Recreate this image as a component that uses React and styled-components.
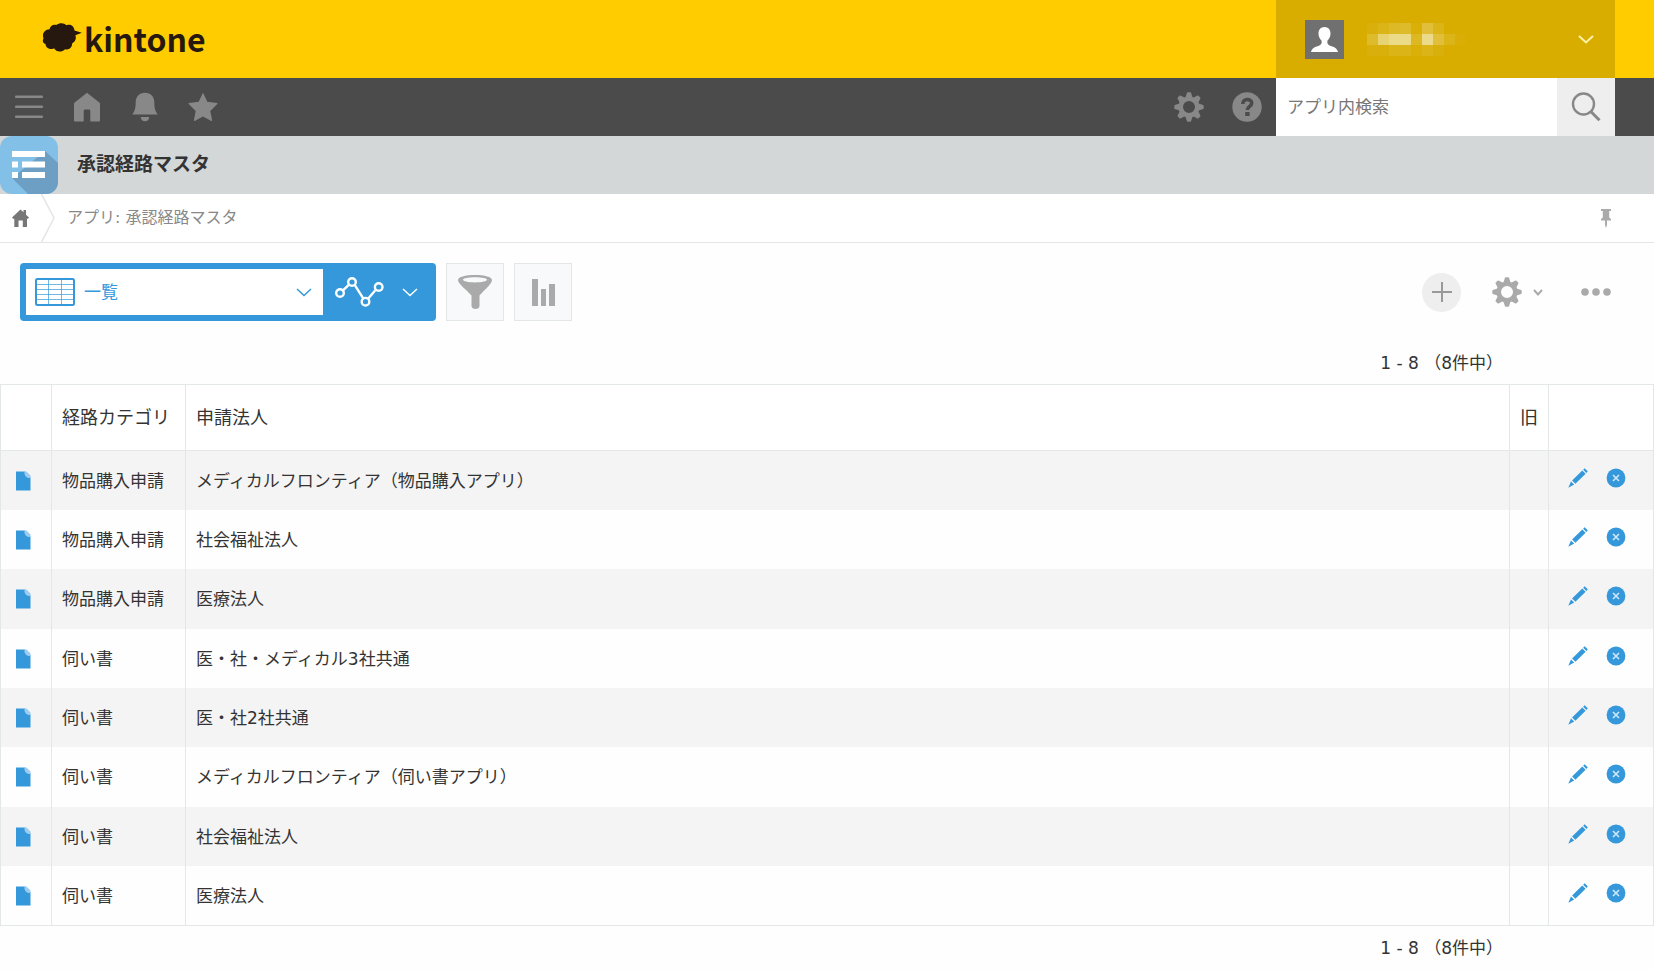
import React, { useState } from 'react';
import styled, { createGlobalStyle } from 'styled-components';

const GlobalStyle = createGlobalStyle`
  *, *::before, *::after {
    box-sizing: border-box;
  }
  body {
    margin: 0;
    background: #fefefe;
    color: #333;
    font-family: 'DejaVu Sans', 'Noto Sans CJK JP', sans-serif;
    font-size: 17px;
    line-height: 24px;
  }
  button, input, select {
    margin: 0;
    padding: 0;
    border: 0;
    border-radius: 0;
    background: none;
    color: inherit;
    font: inherit;
  }
  button {
    cursor: pointer;
  }
  a {
    color: inherit;
    text-decoration: none;
  }
  svg {
    display: block;
    flex: none;
  }
`;

const Header = styled.header`
  display: flex;
  justify-content: space-between;
  height: 78px;
  padding-right: 39px;
  background: #fc0;
`;

const Logo = styled.a`
  display: flex;
  align-items: center;
  gap: 2px;
  padding: 0 0 2px 42px;
  color: #26180f;
  font-family: 'Noto Sans CJK JP', sans-serif;
  font-size: 32px;
  font-weight: bold;
  line-height: 40px;
`;

const Account = styled.button`
  display: flex;
  align-items: center;
  width: 339px;
  padding: 0 21px 0 29px;
  background: #d8ad00;
  color: #fff3a8;
`;

const UserName = styled.span`
  flex: 1;
  padding-left: 23px;
`;

const Nav = styled.nav`
  display: flex;
  height: 58px;
  padding-right: 39px;
  background: #4b4b4b;
  color: #888;
`;

const NavButton = styled.button`
  display: flex;
  align-items: center;
  justify-content: center;
  width: 58px;
  height: 58px;
`;

const Spacer = styled.div`
  flex: 1;
`;

const SearchForm = styled.form`
  display: flex;
  width: 339px;
  background: #fff;
`;

const SearchInput = styled.input`
  flex: 1;
  min-width: 0;
  padding: 0 11px;
  outline: none;
  color: #333;
  &::placeholder {
    color: #777;
    opacity: 1;
  }
`;

const SearchButton = styled(NavButton)`
  background: #eee;
`;

const TitleBar = styled.div`
  display: flex;
  align-items: center;
  gap: 19px;
  height: 58px;
  background: #d4d7d7;
`;

const Title = styled.h1`
  margin: 0;
  padding-bottom: 2px;
  font-size: 19px;
  font-weight: bold;
`;

const Breadcrumb = styled.div`
  display: flex;
  align-items: center;
  height: 49px;
  padding-right: 39px;
  border-bottom: 1px solid #e3e5e6;
  background: #fff;
  color: #888;
  font-size: 16px;
`;

const HomeLink = styled.a`
  display: flex;
  justify-content: flex-end;
  width: 29px;
  margin-right: 12px;
  color: #777;
`;

const Crumb = styled.a`
  flex: 1;
  padding-left: 12px;
`;

const PinButton = styled.button`
  padding: 0 4px;
  color: #aaa;
`;

const Toolbar = styled.div`
  display: flex;
  align-items: center;
  gap: 10px;
  padding: 20px 39px 20px 20px;
  color: #aaa;
`;

const ViewPicker = styled.div`
  display: flex;
  height: 58px;
  padding: 6px 0 6px 6px;
  border-radius: 4px;
  background: #3498db;
`;

const ViewField = styled.label`
  display: flex;
  align-items: center;
  width: 297px;
  padding: 0 11px 0 9px;
  background: #fff;
  color: #3498db;
`;

const ViewSelect = styled.select`
  flex: 1;
  padding-left: 9px;
  appearance: none;
  outline: none;
`;

const GraphButton = styled.button`
  display: flex;
  align-items: center;
  gap: 18px;
  padding: 0 18px 0 12px;
  color: #fff;
`;

const ToolButton = styled.button`
  display: flex;
  align-items: center;
  justify-content: center;
  width: 58px;
  height: 58px;
  border: 1px solid #e3e7e8;
  background: #f7f9fa;
`;

const RecordActions = styled.div`
  display: flex;
  align-items: center;
  gap: 31px;
  margin-left: auto;
`;

const AddButton = styled.button`
  display: flex;
  align-items: center;
  justify-content: center;
  width: 39px;
  height: 39px;
  border-radius: 50%;
  background: #eee;
  color: #999;
`;

const SettingsButton = styled.button`
  display: flex;
  align-items: center;
  gap: 11px;
`;

const MoreButton = styled.button`
  padding: 10px 4px 10px 7px;
`;

const Pager = styled.div`
  padding: 10px 151px 9px;
  text-align: right;
  white-space: pre;
`;

const Table = styled.table`
  width: 100%;
  border: 1px solid #e3e7e8;
  border-right: 0;
  border-spacing: 0;
  table-layout: fixed;
`;

const HeadCell = styled.th`
  width: ${(props) => props.$width || 'auto'};
  height: 66px;
  padding: 0 0 0 10px;
  border-right: 1px solid #e3e7e8;
  border-bottom: 1px solid #e3e7e8;
  background: #fff;
  font-size: 18px;
  font-weight: normal;
  text-align: left;
  white-space: nowrap;
`;

const Row = styled.tr`
  height: 59px;
  &:nth-child(odd) {
    background: #f4f4f4;
  }
  &:nth-child(3n) {
    height: 60px;
  }
`;

const Cell = styled.td`
  padding: 0 0 0 10px;
  border-right: 1px solid #e3e7e8;
`;

const IconCell = styled(Cell)`
  padding: 0 0 0 14px;
  color: #3498db;
`;

const RowActions = styled.div`
  display: flex;
  gap: 18px;
  padding: 0 0 6px 5px;
`;

const CloudLogo = () => (
  <svg width="40" height="30" viewBox="0 0 40 30" fill="currentColor">
    <path d="M1.500 15.500C-.3 11 2.600 6.400 7.500 6.200 8.200 3 11 1 14.200 2 17.500-.6 22-.4 24.500 2.200c4-1.200 7.500.8 8 5.300l7.300 2.200-6.400 2.600c1.200 3.800-.2 6.600-3.300 8.200.2 4.300-3.300 6.900-7.100 5.700-2.600 3-8.800 3.300-10.700-.6C8 27 3.600 25 3.500 21 .8 20 .2 17.700 1.500 15.500z" />
  </svg>
);

const Avatar = () => (
  <svg width="39" height="39" viewBox="0 0 39 39">
    <path fill="#707070" d="M0 0h39v39H0z" />
    <path
      fill="#fff"
      d="M19.500 7c3.700 0 6 2.800 6 6.600 0 3-1.300 5.400-3 7-.6 2.700.2 4.200 2.500 5.100 4.500 1.500 7.200 2.400 8 6.300H6c.8-3.900 3.500-4.800 8-6.300 2.300-.9 3.100-2.400 2.500-5.100-1.700-1.600-3-4-3-7C13.500 9.800 15.800 7 19.500 7z"
    />
  </svg>
);

// x, y, opacity of each tile that hides the account name
const tiles = [
  [0, 0, 0.06], [1, 0, 0.12], [2, 0, 0.2], [3, 0, 0.22], [4, 0, 0.04],
  [5, 0, 0.3], [6, 0, 0.12], [0, 1, 0.22], [1, 1, 0.6], [2, 1, 0.7],
  [3, 1, 0.7], [4, 1, 0.18], [5, 1, 0.72], [6, 1, 0.3], [7, 1, 0.12],
  [8, 1, 0.03], [0, 2, 0.06], [1, 2, 0.06], [2, 2, 0.12], [3, 2, 0.12],
  [4, 2, 0.04], [5, 2, 0.12], [6, 2, 0.06],
];

const HiddenName = () => (
  <svg width="99" height="33" viewBox="0 0 99 33" fill="#f4ecc0">
    {tiles.map(([x, y, opacity]) => (
      <rect
        key={`${x}-${y}`}
        x={x * 11}
        y={y * 11}
        width="11"
        height="11"
        opacity={opacity}
      />
    ))}
  </svg>
);

const Chevron = ({ width = 16, height = 9, stroke = 1.5 }) => (
  <svg
    width={width}
    height={height}
    viewBox={`0 0 ${width} ${height}`}
    fill="none"
    stroke="currentColor"
    strokeWidth={stroke}
  >
    <path d={`M1 1l${width / 2 - 1} ${height - 2.5}L${width - 1} 1`} />
  </svg>
);

const MenuIcon = () => (
  <svg width="28" height="24" viewBox="0 0 28 24" fill="currentColor">
    <rect width="28" height="2.500" rx="1" y="0.500" />
    <rect width="28" height="2.500" rx="1" y="10.500" />
    <rect width="28" height="2.500" rx="1" y="20.500" />
  </svg>
);

const HomeIcon = () => (
  <svg width="28" height="30" viewBox="0 0 28 30" fill="currentColor">
    <path d="M14 .7l12.300 9.700c.5.400.7.800.7 1.400V28c0 1-.5 1.500-1.500 1.500h-8.200V19c0-1-.5-1.500-1.500-1.500h-3.600c-1 0-1.500.5-1.500 1.500v10.500H2.500C1.500 29.500 1 29 1 28V11.800c0-.6.200-1 .7-1.400z" />
  </svg>
);

const BellIcon = () => (
  <svg width="28" height="30" viewBox="0 0 28 30" fill="currentColor">
    <path d="M14 .7c5.700 0 9.300 4 9.300 9.500 0 5.600.6 8.500 3.500 12.300H1.200c2.900-3.800 3.500-6.700 3.500-12.300C4.700 4.700 8.300.7 14 .7zM9.800 25h8.400c0 2.700-1.700 4.300-4.200 4.300S9.800 27.700 9.800 25z" />
  </svg>
);

const StarIcon = () => (
  <svg width="30" height="30" viewBox="0 0 30 30" fill="currentColor">
    <path d="M15 .7l4.300 9 9.700 1.400c.6.100.7.600.3 1l-7 6.800 1.800 9.400c.1.600-.3.900-.8.600L15 24.500l-8.300 4.400c-.5.300-.9 0-.8-.6l1.800-9.400-7-6.800c-.4-.4-.3-.9.300-1l9.700-1.400z" />
  </svg>
);

const GearIcon = () => (
  <svg width="30" height="30" viewBox="-15 -15 30 30" fill="currentColor">
    <circle r="8.300" fill="none" stroke="currentColor" strokeWidth="4.600" />
    {[0, 45, 90, 135, 180, 225, 270, 315].map((angle) => (
      <path
        key={angle}
        transform={`rotate(${angle})`}
        d="M-3.500-9.500L-2.300-13.500Q-2-14.700-1.200-14.700H1.200Q2-14.700 2.300-13.500L3.500-9.500z"
      />
    ))}
  </svg>
);

const HelpIcon = () => (
  <svg width="30" height="30" viewBox="0 0 30 30">
    <circle cx="15" cy="15" r="14.700" fill="currentColor" />
    <path
      d="M10.800 12c0-6 8.900-5.600 8.900-.8 0 3.200-4.400 3.100-4.400 6.800"
      fill="none"
      stroke="#4b4b4b"
      strokeWidth="3.600"
    />
    <rect x="13.200" y="20" width="4.400" height="4" fill="#4b4b4b" />
  </svg>
);

const SearchIcon = () => (
  <svg
    width="30"
    height="30"
    viewBox="0 0 30 30"
    fill="none"
    stroke="currentColor"
    strokeWidth="2.400"
  >
    <circle cx="12.500" cy="12" r="10.500" />
    <path d="M19.800 19.500l8.700 8.700" strokeWidth="3" />
  </svg>
);

const AppIcon = () => (
  <svg width="58" height="58" viewBox="0 0 58 58">
    <defs>
      <clipPath id="app-shape">
        <rect width="58" height="58" rx="12" />
      </clipPath>
    </defs>
    <g clipPath="url(#app-shape)">
      <path fill="#83c0e8" d="M0 0h58v58H0z" />
      <path fill="#6c9fc3" d="M45 15l13 12v31H28L12 42z" />
    </g>
    <g fill="#fff">
      <path d="M12 15h33v6H12zM12 25.500h6v6h-6zM22 25.500h23v6H22zM12 36h6v6h-6zM22 36h23v6H22z" />
    </g>
  </svg>
);

const SmallHomeIcon = () => (
  <svg width="17" height="18" viewBox="0 0 17 18" fill="currentColor">
    <path d="M8.500.5l3 2.800V1h2.500v4.700L17 8.500l-1 1.300h-1V18h-4.200v-6.500H6.500V18H2.300V9.800H1L0 8.500z" />
  </svg>
);

const CrumbArrow = () => (
  <svg
    width="14"
    height="48"
    viewBox="0 0 14 48"
    fill="none"
    stroke="#e3e5e6"
    strokeWidth="1.500"
  >
    <path d="M.5 0L13 24 .5 48" />
  </svg>
);

const PinIcon = () => (
  <svg width="10" height="19" viewBox="0 0 10 19" fill="currentColor">
    <path d="M0 0h10v2H8.200v6.500L10 10v1.500H6V16l-1 3-1-3v-4.500H0V10l1.800-1.500V2H0z" />
  </svg>
);

const GridIcon = () => (
  <svg
    width="40"
    height="28"
    viewBox="0 0 40 28"
    fill="none"
    stroke="currentColor"
  >
    <rect x="1" y="1" width="38" height="26" rx="1.500" strokeWidth="2" />
    <path
      d="M2 6.500h36M2 11.500h36M2 16.500h36M2 21.500h36M13.500 2v24M26.500 2v24"
      opacity="0.7"
    />
  </svg>
);

const LineGraphIcon = () => (
  <svg
    width="49"
    height="30"
    viewBox="0 0 49 30"
    fill="none"
    stroke="currentColor"
    strokeWidth="2.400"
  >
    <path d="M8.300 13.200l5.200-5M20 8.400l8.200 13M33.300 21.500l7-8.300" />
    <circle cx="5" cy="16" r="3.800" />
    <circle cx="17" cy="5" r="3.800" />
    <circle cx="30.500" cy="24.700" r="3.800" />
    <circle cx="43.700" cy="10" r="3.800" />
  </svg>
);

const FunnelIcon = () => (
  <svg width="34" height="34" viewBox="0 0 34 34" fill="currentColor">
    <path
      fillRule="evenodd"
      d="M17 0c10 0 17 2 17 5 0 3.500-6 8.500-12.500 15.500V31c0 4-8 4-8 0V20.500C7 13.500 0 8.500 0 5c0-3 7-5 17-5zm0 2.300C10 2.300 5 3.300 5 4.800s5 2.600 12 2.600 12-1.100 12-2.600-5-2.500-12-2.500z"
    />
  </svg>
);

const BarsIcon = () => (
  <svg width="23" height="27" viewBox="0 0 23 27" fill="currentColor">
    <path d="M0 0h6v27H0zM9 10h5v17H9zM17 5h6v22h-6z" />
  </svg>
);

const PlusIcon = () => (
  <svg width="20" height="20" viewBox="0 0 20 20" fill="currentColor">
    <path d="M9 0h2v9h9v2h-9v9H9v-9H0V9h9z" />
  </svg>
);

const DotsIcon = () => (
  <svg width="30" height="8" viewBox="0 0 30 8" fill="currentColor">
    <circle cx="4" cy="4" r="3.800" />
    <circle cx="15" cy="4" r="3.800" />
    <circle cx="26" cy="4" r="3.800" />
  </svg>
);

const FileIcon = () => (
  <svg width="16" height="20" viewBox="0 0 16 20">
    <path fill="currentColor" d="M1 .5h9l5.500 6v13H1z" />
    <path fill="#9ccdf0" d="M9.500.5h2l4 4v2.500h-2q-3-.5-4-4z" />
  </svg>
);

const PencilIcon = () => (
  <svg width="20" height="20" viewBox="0 0 20 20" fill="currentColor">
    <path d="M14.300 2.600l3.300 3.200L7.400 15.700l-3.300-3.200zM15.200 1.700L16.600.3l3.200 3-1.400 1.600zM3 13.600l3.200 3L.3 19.800z" />
  </svg>
);

const DeleteIcon = () => (
  <svg width="20" height="20" viewBox="0 0 20 20">
    <circle cx="10" cy="10" r="9.400" fill="currentColor" />
    <path
      d="M7 7l6 6M13 7l-6 6"
      fill="none"
      stroke="#cfe8fa"
      strokeWidth="1.600"
    />
  </svg>
);

const records = [
  ['物品購入申請', 'メディカルフロンティア（物品購入アプリ）'],
  ['物品購入申請', '社会福祉法人'],
  ['物品購入申請', '医療法人'],
  ['伺い書', '医・社・メディカル3社共通'],
  ['伺い書', '医・社2社共通'],
  ['伺い書', 'メディカルフロンティア（伺い書アプリ）'],
  ['伺い書', '社会福祉法人'],
  ['伺い書', '医療法人'],
];

const App = () => {
  const [query, setQuery] = useState('');
  return (
    <>
      <GlobalStyle />
      <Header>
        <Logo href="#">
          <CloudLogo />
          kintone
        </Logo>
        <Account aria-label="アカウント">
          <Avatar />
          <UserName>
            <HiddenName />
          </UserName>
          <Chevron stroke={2} />
        </Account>
      </Header>
      <Nav>
        <NavButton aria-label="メニュー">
          <MenuIcon />
        </NavButton>
        <NavButton aria-label="ポータル">
          <HomeIcon />
        </NavButton>
        <NavButton aria-label="通知">
          <BellIcon />
        </NavButton>
        <NavButton aria-label="ブックマーク">
          <StarIcon />
        </NavButton>
        <Spacer />
        <NavButton aria-label="設定">
          <GearIcon />
        </NavButton>
        <NavButton aria-label="ヘルプ">
          <HelpIcon />
        </NavButton>
        <SearchForm onSubmit={(e) => e.preventDefault()}>
          <SearchInput
            type="text"
            aria-label="アプリ内検索"
            placeholder="アプリ内検索"
            value={query}
            onChange={(e) => setQuery(e.target.value)}
          />
          <SearchButton aria-label="検索">
            <SearchIcon />
          </SearchButton>
        </SearchForm>
      </Nav>
      <TitleBar>
        <AppIcon />
        <Title>承認経路マスタ</Title>
      </TitleBar>
      <Breadcrumb>
        <HomeLink href="#" aria-label="ポータル">
          <SmallHomeIcon />
        </HomeLink>
        <CrumbArrow />
        <Crumb href="#">アプリ: 承認経路マスタ</Crumb>
        <PinButton aria-label="固定">
          <PinIcon />
        </PinButton>
      </Breadcrumb>
      <Toolbar>
        <ViewPicker>
          <ViewField>
            <GridIcon />
            <ViewSelect aria-label="一覧の選択">
              <option>一覧</option>
            </ViewSelect>
            <Chevron />
          </ViewField>
          <GraphButton aria-label="グラフ">
            <LineGraphIcon />
            <Chevron />
          </GraphButton>
        </ViewPicker>
        <ToolButton aria-label="絞り込む">
          <FunnelIcon />
        </ToolButton>
        <ToolButton aria-label="集計する">
          <BarsIcon />
        </ToolButton>
        <RecordActions>
          <AddButton aria-label="追加">
            <PlusIcon />
          </AddButton>
          <SettingsButton aria-label="アプリの設定">
            <GearIcon />
            <Chevron width={10} height={7} stroke={2} />
          </SettingsButton>
          <MoreButton aria-label="オプション">
            <DotsIcon />
          </MoreButton>
        </RecordActions>
      </Toolbar>
      <Pager>1 - 8 （8件中）</Pager>
      <Table>
        <thead>
          <tr>
            <HeadCell $width="51px" />
            <HeadCell $width="134px">経路カテゴリ</HeadCell>
            <HeadCell>申請法人</HeadCell>
            <HeadCell $width="39px">旧</HeadCell>
            <HeadCell $width="105px" />
          </tr>
        </thead>
        <tbody>
          {records.map(([category, corporation], index) => (
            <Row key={index}>
              <IconCell>
                <a href="#" aria-label="レコードの詳細">
                  <FileIcon />
                </a>
              </IconCell>
              <Cell>{category}</Cell>
              <Cell>{corporation}</Cell>
              <Cell />
              <IconCell>
                <RowActions>
                  <button aria-label="編集">
                    <PencilIcon />
                  </button>
                  <button aria-label="削除">
                    <DeleteIcon />
                  </button>
                </RowActions>
              </IconCell>
            </Row>
          ))}
        </tbody>
      </Table>
      <Pager>1 - 8 （8件中）</Pager>
    </>
  );
};

export default App;
